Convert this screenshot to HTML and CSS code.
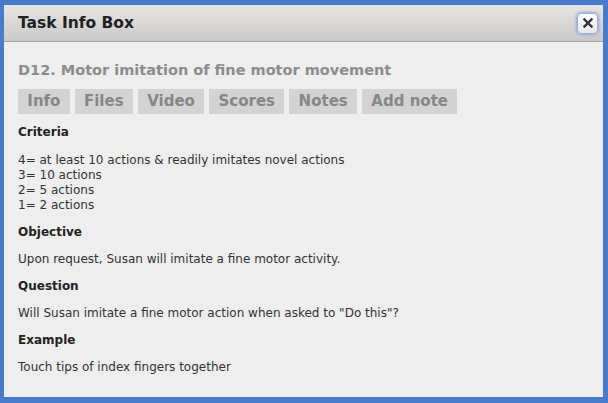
FILE: index.html
```html
<!DOCTYPE html>
<html>
<head>
<meta charset="utf-8">
<link rel="stylesheet" href="styles.css">
</head>
<body>
<div class="frame">
  <div class="dialog">
    <div class="titlebar">
      <span class="title">Task Info Box</span>
      <button class="close" aria-label="close">
        <svg width="10" height="10" viewBox="0 0 10 10"><path d="M1.5 1.5 L8.5 8.5 M8.5 1.5 L1.5 8.5" stroke="#333" stroke-width="2.4" stroke-linecap="square"/></svg>
      </button>
    </div>
    <div class="content">
      <h2 class="task">D12. Motor imitation of fine motor movement</h2>
      <div class="tabs">
        <span class="tab">Info</span>
        <span class="tab">Files</span>
        <span class="tab">Video</span>
        <span class="tab">Scores</span>
        <span class="tab">Notes</span>
        <span class="tab">Add note</span>
      </div>
      <h3 class="label first">Criteria</h3>
      <p class="text">4= at least 10 actions &amp; readily imitates novel actions<br>3= 10 actions<br>2= 5 actions<br>1= 2 actions</p>
      <h3 class="label">Objective</h3>
      <p class="text">Upon request, Susan will imitate a fine motor activity.</p>
      <h3 class="label">Question</h3>
      <p class="text">Will Susan imitate a fine motor action when asked to "Do this"?</p>
      <h3 class="label">Example</h3>
      <p class="text">Touch tips of index fingers together</p>
    </div>
  </div>
</div>
</body>
</html>
```
FILE: styles.css
```css
html, body {
  margin: 0;
  padding: 0;
}
body {
  width: 608px;
  height: 403px;
  overflow: hidden;
  font-family: "DejaVu Sans", Verdana, sans-serif;
}
.frame {
  box-sizing: border-box;
  width: 608px;
  height: 403px;
  background: #4a7bc9;
  padding: 5px 5px 6px 4px;
}
.dialog {
  height: 100%;
  background: #eeeeee;
  display: flex;
  flex-direction: column;
}
.titlebar {
  box-sizing: border-box;
  height: 37px;
  background: linear-gradient(#e8e6e4, #c9c9c9);
  border-bottom: 1px solid #a3a3a3;
  display: flex;
  align-items: center;
  justify-content: space-between;
  padding: 0 5px 0 14px;
}
.title {
  font-weight: bold;
  font-size: 15.5px;
  color: #222;
}
.close {
  width: 21px;
  height: 21px;
  padding: 0;
  border: 1px solid #9fb3d6;
  border-radius: 4px;
  background: linear-gradient(#ffffff, #e4e6ea);
  box-shadow: 0 0 3px 1px #8fa9d8;
  display: flex;
  align-items: center;
  justify-content: center;
}
.content {
  padding: 0 14px;
}
.task {
  margin: 19px 0 0 0;
  font-size: 14.5px;
  line-height: 18px;
  color: #8c8c8c;
  font-weight: bold;
}
.tabs {
  display: flex;
  gap: 5px;
  margin-top: 10px;
}
.tab {
  background: #d3d3d3;
  color: #878787;
  font-weight: bold;
  font-size: 15px;
  height: 25px;
  line-height: 25px;
  padding: 0 9.3px;
}
.label {
  margin: 12px 0 12px 0;
  font-size: 12px;
  line-height: 15px;
  font-weight: bold;
  color: #222;
}
.label.first {
  margin: 10.5px 0 13px 0;
}
.text {
  margin: 0;
  font-size: 12px;
  line-height: 15px;
  color: #333;
}
```
